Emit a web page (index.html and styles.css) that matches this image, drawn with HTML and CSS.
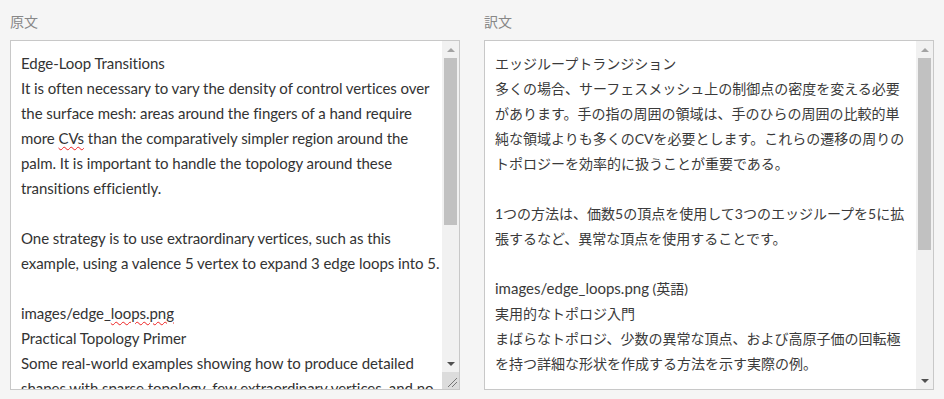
FILE: index.html
```html
<!DOCTYPE html>
<html lang="ja">
<head>
  <meta charset="UTF-8" />
  <title>原文 / 訳文</title>
  <link rel="stylesheet" href="styles.css">
</head>
<body>
  <div class="panes">
    <div class="pane">
      <label class="pane-label">原文</label>
      <div class="text-box">
        <div class="text-content source" lang="en">
          <p>Edge-Loop Transitions</p>
          <p>It is often necessary to vary the density of control vertices over the surface mesh: areas around the fingers of a hand require more <span class="typo">CVs</span> than the comparatively simpler region around the palm. It is important to handle the topology around these transitions efficiently.</p>
          <p class="blank"></p>
          <p>One strategy is to use extraordinary vertices, such as this example, using a valence 5 vertex to expand 3 edge loops into 5.</p>
          <p class="blank"></p>
          <p>images/edge_<span class="typo">loops.png</span></p>
          <p>Practical Topology Primer</p>
          <p>Some real-world examples showing how to produce detailed shapes with sparse topology, few extraordinary vertices, and no high-valence poles.</p>
        </div>
        <div class="scrollbar">
          <div class="sb-btn sb-up"></div>
          <div class="sb-track"><div class="sb-thumb" style="height: 167px"></div></div>
          <div class="sb-btn sb-down"></div>
          <div class="sb-corner">
            <svg width="17" height="17" viewBox="0 0 17 17">
              <path d="M6 15 L15 6 M10 15 L15 10" stroke="#777" stroke-width="1" fill="none"/>
            </svg>
          </div>
        </div>
      </div>
    </div>
    <div class="pane">
      <label class="pane-label">訳文</label>
      <div class="text-box">
        <div class="text-content translated">
          <p>エッジループトランジション</p>
          <p>多くの場合、サーフェスメッシュ上の制御点の密度を変える必要があります。手の指の周囲の領域は、手のひらの周囲の比較的単純な領域よりも多くのCVを必要とします。これらの遷移の周りのトポロジーを効率的に扱うことが重要である。</p>
          <p class="blank"></p>
          <p>1つの方法は、価数5の頂点を使用して3つのエッジループを5に拡張するなど、異常な頂点を使用することです。</p>
          <p class="blank"></p>
          <p><span class="latin">images/edge_loops.png</span> (英語)</p>
          <p>実用的なトポロジ入門</p>
          <p>まばらなトポロジ、少数の異常な頂点、および高原子価の回転極を持つ詳細な形状を作成する方法を示す実際の例。</p>
          <p class="blank"></p>
          <p>ポリゴンモデリングの基本</p>
        </div>
        <div class="scrollbar">
          <div class="sb-btn sb-up"></div>
          <div class="sb-track"><div class="sb-thumb" style="height: 192px"></div></div>
          <div class="sb-btn sb-down"></div>
        </div>
      </div>
    </div>
  </div>
</body>
</html>
```
FILE: styles.css
```css
* { margin: 0; padding: 0; box-sizing: border-box; }

body {
  background: #f5f5f5;
  color: #333;
  font-family: Lato, "Noto Sans CJK JP", sans-serif;
}

.panes {
  display: grid;
  grid-template-columns: 1fr 1fr;
  gap: 24px;
  padding: 12px 10px 0;
}

.pane-label {
  display: block;
  font-size: 14px;
  line-height: 20px;
  color: #888;
  margin-bottom: 8px;
}

/* textarea look-alike */
.text-box {
  height: 350px;
  background: #fff;
  border: 1px solid #c8c8c8;
  display: flex;
}
.text-content {
  flex: 1;
  min-width: 0;
  overflow: hidden;
  padding: 10px 0 0 10px;
  font-size: 15px;
  line-height: 25px;
}
.text-content .blank { height: 25px; }
.source { letter-spacing: -0.05px; }

/* Japanese glyphs sit a bit narrower in the original */
.translated { font-size: 14px; color: #3a3a3a; padding-right: 6px; }
.translated .latin { font-size: 15px; }

.typo {
  text-decoration: underline wavy #e22;
  text-decoration-thickness: 1px;
  text-underline-offset: 2px;
}

/* classic scrollbar */
.scrollbar {
  width: 17px;
  flex: none;
  display: flex;
  flex-direction: column;
  background: #f1f1f1;
}
.sb-btn {
  height: 17px;
  display: flex;
  align-items: center;
  justify-content: center;
}
.sb-btn::after {
  content: "";
  width: 0;
  height: 0;
  border-left: 4px solid transparent;
  border-right: 4px solid transparent;
}
.sb-up::after { border-bottom: 4px solid #a3a3a3; }
.sb-down::after { border-top: 4px solid #505050; }
.sb-track { flex: 1; }
.sb-thumb {
  margin: 0 2px;
  background: #c1c1c1;
}
.sb-corner {
  height: 17px;
  background: #dcdcdc;
}
.sb-corner svg { display: block; }
```
